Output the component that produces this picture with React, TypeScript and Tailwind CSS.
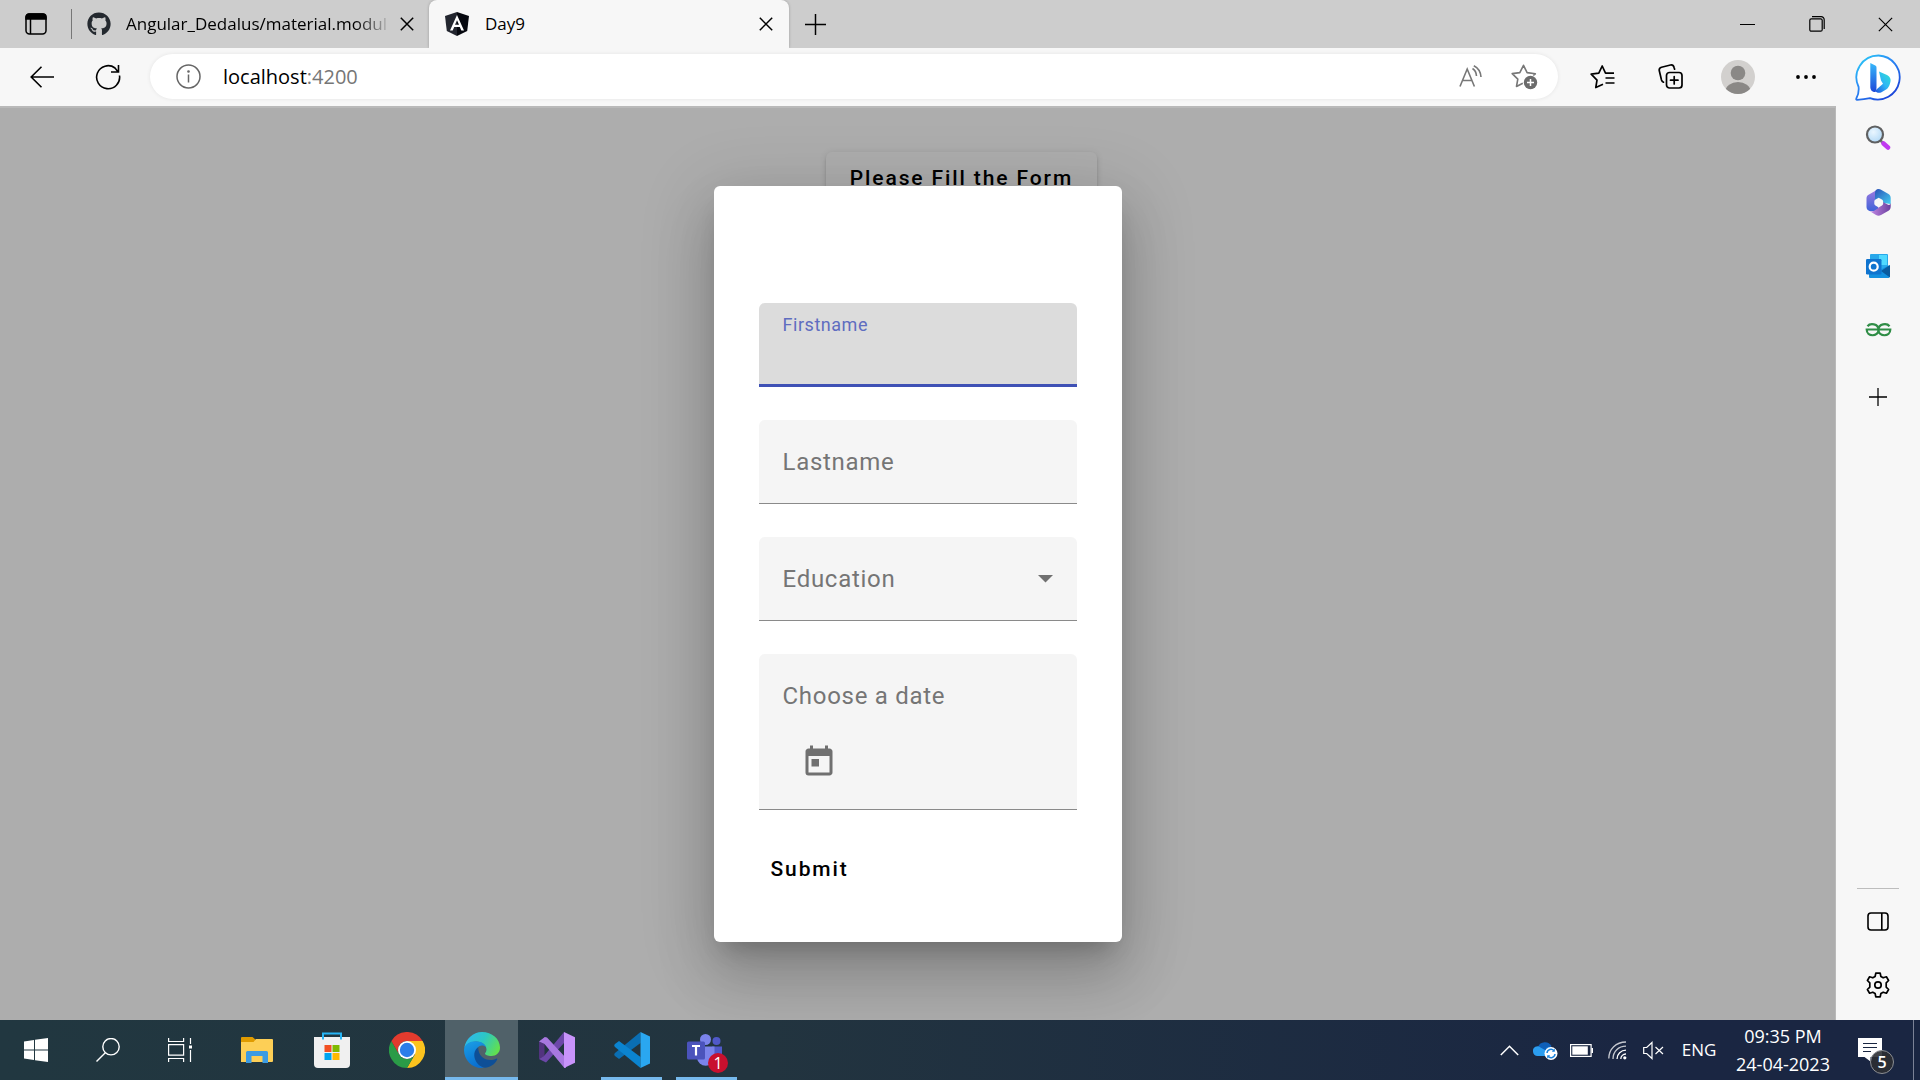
import { useState, type ReactNode } from "react";
import { FaGithub } from "react-icons/fa";
import { MdToday } from "react-icons/md";

const UI = "font-['Open_Sans','Noto_Sans',sans-serif]";

/* ---------- browser icons ---------- */

function TabActionsIcon() {
  return (
    <svg width="22" height="22" viewBox="0 0 22 22" fill="none" stroke="#000" strokeWidth="1.5">
      <rect x="1" y="1" width="20" height="20" rx="3.5" />
      <path d="M1 6V4a3 3 0 0 1 3-3h14a3 3 0 0 1 3 3v2z" fill="#000" />
      <path d="M5.5 6v15" />
    </svg>
  );
}

function CrossIcon({ size, width }: { size: number; width: number }) {
  return (
    <svg width={size} height={size} viewBox="0 0 14 14" fill="none" stroke="#000" strokeWidth={width}>
      <path d="M.8.8l12.4 12.4M13.2.8L.8 13.2" />
    </svg>
  );
}

function PlusIcon({ size }: { size: number }) {
  return (
    <svg width={size} height={size} viewBox="0 0 20 20" fill="none" stroke="#000" strokeWidth="1.4">
      <path d="M10 0v20M0 10h20" />
    </svg>
  );
}

function AngularIcon() {
  return (
    <svg width="24" height="24" viewBox="0 0 24 24">
      <path d="M12 0L0 4l1.8 15L12 24z" fill="#23262f" />
      <path d="M12 0l12 4-1.8 15L12 24z" fill="#06080f" />
      <path d="M12 3L5 18.5h2.7l1.5-3.5h5.6l1.5 3.5H19zm0 5.2l2 4.6h-4z" fill="#fff" fillRule="evenodd" />
    </svg>
  );
}

function BackIcon() {
  return (
    <svg width="24" height="22" viewBox="0 0 24 22" fill="none" stroke="#000" strokeWidth="1.6">
      <path d="M24 11H1.2M11.5.8L1.2 11l10.3 10.2" />
    </svg>
  );
}

function RefreshIcon() {
  return (
    <svg width="26" height="26" viewBox="0 0 26 26" fill="none" stroke="#000" strokeWidth="1.6">
      <path d="M24.5 11.5A11.5 11.5 0 1 1 20 4l2.8 3.5M23.5 1v7H16" />
    </svg>
  );
}

function InfoIcon() {
  return (
    <svg width="25" height="25" viewBox="0 0 25 25" fill="none" stroke="#666" strokeWidth="1.5">
      <circle cx="12.5" cy="12.5" r="11.5" />
      <path d="M12.5 10.5v8" />
      <circle cx="12.5" cy="7.5" r=".6" fill="#666" />
    </svg>
  );
}

function ReadAloudIcon() {
  return (
    <svg width="24" height="23" viewBox="0 0 24 23" fill="none" stroke="#777" strokeWidth="1.6">
      <path d="M1 21.5L8.2 4l7.2 17.5M3.5 15.5h9.4M13.5 3.5c2.3 1.5 3.8 4 4 7.5M14.8.8c4 2 6.8 5.8 7.2 11.2" />
    </svg>
  );
}

function StarAddIcon() {
  return (
    <svg width="27" height="27" viewBox="0 0 27 27" fill="none">
      <path
        d="M11.8 20.300L5.500 23.500l1.300-7.400L1.200 10.600l7.600-1 3.700-7.300 3.600 7.300 8.200 1.200-2 1.700"
        stroke="#777"
        strokeWidth="1.6"
        strokeLinejoin="round"
      />
      <circle cx="19.5" cy="19.5" r="6.7" fill="#6b6b6b" />
      <path d="M19.5 16v7M16 19.5h7" stroke="#fff" strokeWidth="1.5" />
    </svg>
  );
}

function FavoritesIcon() {
  return (
    <svg width="25" height="25" viewBox="0 0 25 25" fill="none" stroke="#000" strokeWidth="1.7" strokeLinejoin="round">
      <path d="M13 20.200l-7.200 3.300 1.200-7.400L1.200 10.200l7.600-1.100L12.200 2l3.300 7.100H24M15.500 14H24.500M15.500 19h9" />
    </svg>
  );
}

function CollectionsIcon() {
  return (
    <svg width="25" height="25" viewBox="0 0 25 25" fill="none" stroke="#000" strokeWidth="1.7" strokeLinecap="round">
      <rect x="8.5" y="8.5" width="15.5" height="15.5" rx="3" />
      <path d="M16.200 12.500v7.500M12.500 16.200h7.500" />
      <path d="M5.500 18.200A3.500 3.500 0 0 1 3.500 16L1.300 6.800A3 3 0 0 1 3.500 3.300L12.500 1a3 3 0 0 1 3.500 2.200l.6 2" />
    </svg>
  );
}

function AvatarIcon() {
  return (
    <svg width="34" height="34" viewBox="0 0 34 34">
      <defs>
        <clipPath id="avatar-clip">
          <circle cx="17" cy="17" r="17" />
        </clipPath>
      </defs>
      <g clipPath="url(#avatar-clip)">
        <rect width="34" height="34" fill="#d2d0ce" />
        <circle cx="17" cy="13" r="7.3" fill="#8a8886" />
        <ellipse cx="17" cy="31" rx="12.5" ry="9" fill="#8a8886" />
      </g>
    </svg>
  );
}

function DotsIcon() {
  return (
    <svg width="20" height="4" viewBox="0 0 20 4">
      <circle cx="2" cy="2" r="1.9" />
      <circle cx="10" cy="2" r="1.9" />
      <circle cx="18" cy="2" r="1.9" />
    </svg>
  );
}

function BingIcon() {
  return (
    <svg width="47" height="47" viewBox="0 0 47 47">
      <defs>
        <linearGradient id="bing-ring" x1="0" y1="0" x2=".8" y2="1">
          <stop offset="0" stopColor="#2bd3f5" />
          <stop offset=".45" stopColor="#2a8af6" />
          <stop offset="1" stopColor="#1b3fd6" />
        </linearGradient>
        <linearGradient id="bing-stem" x1="0" y1="0" x2="0" y2="1">
          <stop offset="0" stopColor="#37b9fb" />
          <stop offset="1" stopColor="#1c47d8" />
        </linearGradient>
        <linearGradient id="bing-bowl" x1="1" y1="0" x2="0" y2="1">
          <stop offset="0" stopColor="#2fe3d0" />
          <stop offset=".5" stopColor="#2fb7f5" />
          <stop offset="1" stopColor="#1d50dd" />
        </linearGradient>
      </defs>
      <path
        d="M23.500 1.500a22 22 0 1 1-8.500 42.600C10.500 45 6 45.500 2 45.800 1.200 45.800 1 45 1.300 44.500 3 41.500 4 37 3.600 33A22 22 0 0 1 23.500 1.500z"
        fill="#fff"
        stroke="url(#bing-ring)"
        strokeWidth="1.8"
      />
      <path
        d="M24 17.500l8 3.600c3.300 1.700 4.500 4.800 3 8.400-.6 2.500-1.800 4.500-3.500 5.700l-5 3c-2.500 1.200-5 .6-6.500-1.500l8-7-2-3.200z"
        fill="url(#bing-bowl)"
      />
      <path d="M15.300 9l5 2.600a2 2 0 0 1 1.200 1.900v20.800l-1 3.800c-3 .2-5.200-2-5.200-5.100z" fill="url(#bing-stem)" />
    </svg>
  );
}

/* ---------- sidebar icons ---------- */

function SearchSideIcon() {
  return (
    <svg width="26" height="26" viewBox="0 0 26 26">
      <defs>
        <radialGradient id="lens" cx=".4" cy=".35" r=".8">
          <stop offset="0" stopColor="#eaf6ff" />
          <stop offset="1" stopColor="#a9d4f5" />
        </radialGradient>
      </defs>
      <path d="M15.500 15.500l3 3" stroke="#777" strokeWidth="2.5" />
      <path d="M18.500 18.500l4.500 4" stroke="#c03af0" strokeWidth="4.5" strokeLinecap="round" />
      <circle cx="10" cy="9.5" r="8" fill="url(#lens)" stroke="#5f6061" strokeWidth="2.2" />
    </svg>
  );
}

function OfficeIcon() {
  return (
    <svg width="25" height="27" viewBox="0 0 25 27">
      <defs>
        <linearGradient id="m365-left" x1="0" y1="0" x2="0" y2="1">
          <stop offset="0" stopColor="#a07be0" />
          <stop offset="1" stopColor="#3d62d8" />
        </linearGradient>
        <linearGradient id="m365-top" x1="0" y1="0" x2="1" y2="1">
          <stop offset="0" stopColor="#2a52b8" />
          <stop offset="1" stopColor="#45cdf0" />
        </linearGradient>
        <linearGradient id="m365-bottom" x1="0" y1="0" x2="1" y2="0">
          <stop offset="0" stopColor="#c58ae6" />
          <stop offset="1" stopColor="#6a3f9e" />
        </linearGradient>
      </defs>
      <path d="M12.500 0L3 5.500C1 6.600.5 7.800.5 9.500V18c0 2 1 3 3 4l9 .5V0z" fill="url(#m365-left)" />
      <path d="M12.500 0c1 0 2 .3 3 .9l7 4.100c1.500 1 2.200 2.200 2.200 4v6L17 14H9V4c0-2.500 1.500-4 3.500-4z" fill="url(#m365-top)" />
      <path
        d="M24.700 13.500v4c0 2-.7 3.300-2.200 4.200L15 26.100c-1.700 1-3.300 1-5 0L3.500 22c2 .8 3.500.5 5-.4L12.500 19V13h4.500l4.500 2.500c1.800 1 3.200 0 3.200-2z"
        fill="url(#m365-bottom)"
      />
      <path
        d="M12.700 8.800l3.200 1.800c.8.500 1.200 1.100 1.200 2v2c0 .9-.4 1.500-1.200 2l-3.200 1.800-3.200-1.800c-.8-.5-1.200-1.100-1.200-2v-2c0-.9.4-1.500 1.200-2z"
        fill="#f7f7f7"
      />
    </svg>
  );
}

function OutlookIcon() {
  return (
    <svg width="26" height="26" viewBox="0 0 26 26">
      <rect x="5" y="1" width="18" height="18" rx="1" fill="#28a8ea" />
      <rect x="14" y="2" width="8" height="10" fill="#50d9ff" />
      <path d="M4 13l11 4 9.500-5v12a1 1 0 0 1-1 1H5a1 1 0 0 1-1-1z" fill="#1490df" />
      <path d="M25 12v12.500L16 18z" fill="#0a5a9e" />
      <rect x="1" y="6" width="15.5" height="15.5" rx="1.2" fill="#0f74cf" />
      <circle cx="8.700" cy="13.700" r="4" fill="none" stroke="#fff" strokeWidth="2.2" />
    </svg>
  );
}

function GeeksIcon() {
  return (
    <svg width="27" height="14" viewBox="0 0 27 14" fill="none" stroke="#2f8d46" strokeWidth="2.2">
      <path d="M24.500 3.200C22 0 13.500.2 13.500 7c0 6.800 11.800 7.300 11.800-.5H1.700C1.700 14.300 13.500 13.800 13.500 7 13.500.2 5 0 2.500 3.200" />
    </svg>
  );
}

function PanelIcon() {
  return (
    <svg width="22" height="19" viewBox="0 0 22 19" fill="none" stroke="#000" strokeWidth="1.6">
      <rect x="1" y="1" width="20" height="17" rx="3" />
      <path d="M14.800 1v17" />
    </svg>
  );
}

function GearIcon() {
  return (
    <svg width="26" height="26" viewBox="0 0 26 26" fill="none" stroke="#000" strokeWidth="1.7" strokeLinejoin="round">
      <circle cx="13" cy="13" r="3.2" />
      <path d="M10.800 1.200h4.400l.7 3.300 2.300 1.300 3.200-1 2.200 3.700-2.400 2.300v4.400l2.400 2.300-2.200 3.700-3.200-1-2.300 1.300-.7 3.300h-4.400l-.7-3.300-2.300-1.300-3.200 1-2.200-3.700 2.400-2.300v-4.400L2.400 8.500l2.200-3.700 3.200 1 2.300-1.300z" />
    </svg>
  );
}

/* ---------- taskbar icons ---------- */

function WindowsIcon() {
  return (
    <svg width="24" height="24" viewBox="0 0 24 24" fill="#fff">
      <path d="M0 3.400L10 2v9.500H0zM11 1.800L24 0v11.500H11zM0 12.500h10V22L0 20.600zM11 12.500h13V24l-13-1.800z" />
    </svg>
  );
}

function TaskSearchIcon() {
  return (
    <svg width="24" height="24" viewBox="0 0 24 24" fill="none" stroke="#fff" strokeWidth="1.4">
      <circle cx="15" cy="8.700" r="8.200" />
      <path d="M9.300 14.700L.5 23.500" />
    </svg>
  );
}

function TaskViewIcon() {
  return (
    <svg width="25" height="24" viewBox="0 0 25 24" fill="none" stroke="#fff" strokeWidth="1.2">
      <path d="M.6 0v3.500h15V0M.6 24v-3.500h15V24M.6 6.600h15v10.500H.6zM22.500 0v6M22.500 12v12" />
      <rect x="21" y="7.500" width="3" height="3" fill="#fff" stroke="none" />
    </svg>
  );
}

function FolderIcon() {
  return (
    <svg width="32" height="27" viewBox="0 0 32 27">
      <path d="M0 1a1 1 0 0 1 1-1h10.500L15 3v4H0z" fill="#e09b00" />
      <path d="M0 5h12.500L15 2h16a1 1 0 0 1 1 1v21a1 1 0 0 1-1 1H0z" fill="#fdcf56" />
      <path d="M5 15.500A1.500 1.500 0 0 1 6.500 14h19a1.500 1.500 0 0 1 1.500 1.500V26h-5.500v-7h-11v7H5z" fill="#3c9be2" />
    </svg>
  );
}

function StoreIcon() {
  return (
    <svg width="36" height="36" viewBox="0 0 36 36">
      <path d="M0 5h36v27a4 4 0 0 1-4 4H4a4 4 0 0 1-4-4z" fill="#f0f0f0" />
      <path d="M9 7.500V1.500h18v6" fill="none" stroke="#27b5f5" strokeWidth="2" />
      <path d="M10.500 13h7v7h-7z" fill="#f25022" />
      <path d="M18.500 13h7v7h-7z" fill="#7fba00" />
      <path d="M10.500 21h7v7h-7z" fill="#00a4ef" />
      <path d="M18.500 21h7v7h-7z" fill="#ffb900" />
    </svg>
  );
}

function ChromeIcon() {
  return (
    <svg width="36" height="36" viewBox="0 0 36 36">
      <path d="M18 9h15.600A18 18 0 0 1 18 36l7.800-13.500z" fill="#fcc31e" />
      <path d="M18 36A18 18 0 0 1 2.400 9l7.800 13.500A9 9 0 0 0 25.800 22.500z" fill="#2a9b47" />
      <path d="M2.400 9a18 18 0 0 1 31.200 0H18a9 9 0 0 0-7.800 13.500z" fill="#e33b2e" />
      <circle cx="18" cy="18" r="9" fill="#fff" />
      <circle cx="18" cy="18" r="7.200" fill="#2b7de9" />
    </svg>
  );
}

function EdgeIcon() {
  return (
    <svg width="36" height="36" viewBox="0 0 36 36">
      <defs>
        <linearGradient id="edge-top" x1="0" y1=".2" x2="1" y2=".6">
          <stop offset="0" stopColor="#2fb8f0" />
          <stop offset=".5" stopColor="#2cc7c4" />
          <stop offset="1" stopColor="#62e04e" />
        </linearGradient>
        <linearGradient id="edge-left" x1="0" y1="0" x2=".4" y2="1">
          <stop offset="0" stopColor="#1ba0e6" />
          <stop offset="1" stopColor="#0a6fd0" />
        </linearGradient>
      </defs>
      <path
        d="M.3 16C1.500 7 9 0 18 0c10 0 18 7 18 15.500 0 5.500-4 8.500-8.500 8.500-4 0-6.500-1.200-6.500-2.500 0-.7 1.500-1.500 1.500-4 0-4-4.500-8-10.500-8C6.500 9.500 2 12.500.3 16z"
        fill="url(#edge-top)"
      />
      <path
        d="M0 18c0-6 6-8.800 11.500-8.800 6 0 10 3 10.800 6.300-1.300-1.500-3-2-4.300-2-4 0-7 5-7 9.500 0 6 4.500 11 9 12.600-.7.300-1.500.4-2.500.4C8 36 0 28 0 18z"
        fill="url(#edge-left)"
      />
      <path
        d="M14.200 15.200C11 17.500 10 20.500 10.300 24c.5 5.500 5 11 10.700 11.700 5 0 10-3.500 12.200-8.200.3-.7-.4-1.200-1-.8-1.700.9-3.700 1.300-5.700 1.300-6.500 0-12.300-4.300-12.300-12.800z"
        fill="#0e4f97"
      />
    </svg>
  );
}

function VisualStudioIcon() {
  return (
    <svg width="36" height="36" viewBox="0 0 36 36">
      <path d="M0 9.500L5.500 12v12L0 27z" fill="#52337f" />
      <path d="M25 0v11L7 30.500 2 28l-2-1 5-3z" fill="#6c47a8" />
      <path d="M0 9.500L5.800 5 8 5.600 27 26v10l-2-.5L5.500 12z" fill="#a878e0" />
      <path d="M25 0l11 5.300v25.400L25 36z" fill="#c893fa" />
    </svg>
  );
}

function VsCodeIcon() {
  return (
    <svg width="36" height="36" viewBox="0 0 36 36">
      <path d="M26.500 0v11L5 27l-4-3c-1-.8-1-2 0-3z" fill="#0a6eb3" />
      <path d="M1 15c-1-1-1-2.200 0-3l4-3 21.500 16v11z" fill="#0b84d0" />
      <path d="M26.500 0L36 4.500v27L26.500 36z" fill="#2aa7f0" />
    </svg>
  );
}

function TeamsIcon() {
  return (
    <svg width="39" height="37" viewBox="0 0 39 37">
      <circle cx="29.500" cy="7" r="4" fill="#5059c9" />
      <circle cx="18.500" cy="5.500" r="5.500" fill="#7b83eb" />
      <path d="M25 12.500h10v12a6 6 0 0 1-8 5z" fill="#5059c9" />
      <path d="M10 12.500h17.500V24a8.800 8.800 0 0 1-17.500 0z" fill="#7b83eb" />
      <rect x="0" y="7.500" width="18" height="18" rx="1.500" fill="#4b53bc" />
      <path d="M5 12h8M9 12v9.500" stroke="#fff" strokeWidth="2.2" fill="none" />
    </svg>
  );
}

function ChevronUpIcon() {
  return (
    <svg width="19" height="11" viewBox="0 0 19 11" fill="none" stroke="#fff" strokeWidth="1.5">
      <path d="M.8 10L9.500 1.200l8.700 8.800" />
    </svg>
  );
}

function OneDriveIcon() {
  return (
    <svg width="25" height="20" viewBox="0 0 25 20">
      <path d="M5 7a7.500 7.500 0 0 1 13.500-1l-4 6.500L3 15z" fill="#0f5fb8" />
      <path d="M0 11.500a4.500 4.500 0 0 1 7.500-4L20 14.500 17 16H4.500A4.500 4.500 0 0 1 0 11.500z" fill="#2b9df0" />
      <path d="M13 8a6 6 0 0 1 9 3l-6 4z" fill="#1b83dc" />
      <circle cx="18" cy="13.500" r="6.500" fill="#fff" />
      <path d="M14 13a4 4 0 0 1 7-2.300M22 14a4 4 0 0 1-7 2.300" fill="none" stroke="#1b83dc" strokeWidth="1.5" />
      <path d="M21.800 8.500v3.200h-3zM14.200 18.500v-3.200h3z" fill="#1b83dc" />
    </svg>
  );
}

function BatteryIcon() {
  return (
    <svg width="23" height="13" viewBox="0 0 23 13">
      <rect x=".6" y=".6" width="20.500" height="11.800" fill="none" stroke="#fff" strokeWidth="1.2" />
      <rect x="2.300" y="2.300" width="15.500" height="8.400" fill="#fff" />
      <rect x="21.500" y="4" width="1.500" height="5" fill="#fff" />
    </svg>
  );
}

function WifiIcon() {
  return (
    <svg width="19" height="19" viewBox="0 0 19 19" fill="none" stroke="#fff" strokeWidth="1.3">
      <path d="M.8 17.500C.8 8 8 1 18 1M5 18C5 10.500 10.500 5.200 18 5.200" opacity=".75" />
      <path d="M9 18c0-5 4-8.800 9-8.800M12.800 18a5 5 0 0 1 5.200-5" />
      <circle cx="16.800" cy="16.800" r="1.600" fill="#fff" stroke="none" />
    </svg>
  );
}

function MutedIcon() {
  return (
    <svg width="21" height="19" viewBox="0 0 21 19" fill="none" stroke="#fff" strokeWidth="1.2">
      <path d="M.7 6.500h3L9 1.500v16l-5.300-5h-3zM12.500 6l7.500 7M20 6l-7.500 7" />
    </svg>
  );
}

function NotificationIcon() {
  return (
    <svg width="24" height="24" viewBox="0 0 24 24">
      <path d="M0 0h24v19H12.500l0 4.500-6-4.500H0z" fill="#fff" />
      <path d="M5 5.500h14M5 9.500h14M5 13.500h8" stroke="#1a2742" strokeWidth="1.2" />
    </svg>
  );
}

/* ---------- building blocks ---------- */

function IconButton({ label, className, children }: { label: string; className: string; children: ReactNode }) {
  return (
    <button type="button" aria-label={label} className={`flex shrink-0 items-center justify-center ${className}`}>
      {children}
    </button>
  );
}

const fieldLabel =
  "pointer-events-none px-6 text-2xl tracking-[0.03em] text-[#757575] [grid-area:1/1]";
const fieldBox = "grid items-center rounded-t-md border-b border-[#8a8a8a] bg-[#f5f5f5]";

function TabStrip() {
  return (
    <header className="flex h-12 shrink-0 items-stretch bg-[#cdcdcd]">
      <IconButton label="Tab actions menu" className="w-[71px]">
        <TabActionsIcon />
      </IconButton>
      <div className="h-[30px] w-px self-center bg-[#777]" />
      <div className="flex w-[357px] items-center px-[15px]">
        <FaGithub size={24} color="#24292f" className="shrink-0" />
        <span className="ml-[15px] min-w-0 flex-1 whitespace-nowrap text-[17px] [mask-image:linear-gradient(to_right,black_86%,transparent)]">
          Angular_Dedalus/material.modul
        </span>
        <IconButton label="Close Angular_Dedalus tab" className="ml-2">
          <CrossIcon size={14} width={1.5} />
        </IconButton>
      </div>
      <div className="flex w-[360px] items-center rounded-t-lg bg-[#f7f7f7] px-4 shadow-[0_0_3px_rgba(0,0,0,0.25)]">
        <AngularIcon />
        <span className="ml-4 flex-1 text-[17px]">Day9</span>
        <IconButton label="Close Day9 tab" className="">
          <CrossIcon size={14} width={1.5} />
        </IconButton>
      </div>
      <IconButton label="New tab" className="w-[53px]">
        <PlusIcon size={21} />
      </IconButton>
      <div className="flex-1" />
      <IconButton label="Minimize" className="w-[69px]">
        <svg width="15" height="1" viewBox="0 0 15 1">
          <rect width="15" height="1" />
        </svg>
      </IconButton>
      <IconButton label="Restore" className="w-[69px]">
        <svg width="16" height="16" viewBox="0 0 16 16" fill="none" stroke="#000" strokeWidth="1.2">
          <rect x=".8" y="2.800" width="12.400" height="12.400" rx="1.500" />
          <path d="M3 .7h9a3 3 0 0 1 3.200 3V13" />
        </svg>
      </IconButton>
      <IconButton label="Close window" className="w-[69px]">
        <CrossIcon size={15} width={1.1} />
      </IconButton>
    </header>
  );
}

function Toolbar() {
  return (
    <div className="flex h-[58px] shrink-0 items-center gap-5 bg-[#f7f7f7] pb-px pl-[9px] pr-1.5">
      <div className="flex min-w-0 flex-1 items-center">
        <IconButton label="Back" className="h-11 w-[66px]">
          <BackIcon />
        </IconButton>
        <IconButton label="Refresh" className="h-11 w-[66px]">
          <RefreshIcon />
        </IconButton>
        <div className="ml-[9px] flex h-[45px] min-w-0 flex-1 items-center rounded-full bg-white pl-[26px] pr-5 shadow-[0_0_4px_rgba(0,0,0,0.08)]">
          <IconButton label="View site information" className="">
            <InfoIcon />
          </IconButton>
          <a href="#" className="ml-[22px] flex-1 text-xl text-black">
            localhost<span className="text-[#767676]">:4200</span>
          </a>
          <IconButton label="Read aloud" className="w-20">
            <ReadAloudIcon />
          </IconButton>
          <IconButton label="Add to favorites" className="">
            <StarAddIcon />
          </IconButton>
        </div>
      </div>
      <IconButton label="Favorites" className="size-12">
        <FavoritesIcon />
      </IconButton>
      <IconButton label="Collections" className="size-12">
        <CollectionsIcon />
      </IconButton>
      <IconButton label="Profile" className="size-12">
        <AvatarIcon />
      </IconButton>
      <IconButton label="Settings and more" className="size-12">
        <DotsIcon />
      </IconButton>
    </div>
  );
}

function DialogForm() {
  const [education, setEducation] = useState("");
  return (
    <form
      role="dialog"
      aria-label="Personal details"
      onSubmit={(e) => e.preventDefault()}
      className="flex w-[408px] flex-col gap-[33px] rounded-md bg-white px-[45px] pb-[45px] pt-[117px] shadow-[0_16px_22px_-10px_rgba(0,0,0,0.2),0_36px_57px_4px_rgba(0,0,0,0.14),0_13px_69px_12px_rgba(0,0,0,0.12)]"
    >
      <div className="grid h-[84px] rounded-t-md border-b-3 border-[#3f51b5] bg-[#dcdcdc]">
        <label
          htmlFor="firstname"
          className="pointer-events-none self-start px-6 pt-2.5 text-lg leading-6 tracking-[0.03em] text-[#5f6dc0] [grid-area:1/1]"
        >
          Firstname
        </label>
        <input id="firstname" className="w-full bg-transparent px-6 pt-8 text-2xl outline-none [grid-area:1/1]" />
      </div>

      <div className={`h-[84px] ${fieldBox}`}>
        <label htmlFor="lastname" className={fieldLabel}>
          Lastname
        </label>
        <input id="lastname" className="h-full w-full bg-transparent px-6 text-2xl outline-none [grid-area:1/1]" />
      </div>

      <div className={`h-[84px] ${fieldBox}`}>
        <label htmlFor="education" className={fieldLabel}>
          {education ? "" : "Education"}
        </label>
        <select
          id="education"
          value={education}
          onChange={(e) => setEducation(e.target.value)}
          className="h-full w-full appearance-none bg-transparent px-6 text-2xl outline-none [grid-area:1/1]"
        >
          <option value="" />
        </select>
        <svg
          width="15"
          height="8"
          viewBox="0 0 15 8"
          className="pointer-events-none mr-6 justify-self-end [grid-area:1/1]"
        >
          <path d="M0 0h15L7.500 7.500z" fill="#707070" />
        </svg>
      </div>

      <div className={`pb-[11px] ${fieldBox}`}>
        <label htmlFor="date" className={`pt-3 ${fieldLabel}`}>
          Choose a date
        </label>
        <input id="date" className="h-[72px] w-full bg-transparent px-6 text-2xl outline-none [grid-area:1/1]" />
        <IconButton label="Open calendar" className="ml-6 size-[72px]">
          <MdToday size={36} color="#707070" />
        </IconButton>
      </div>

      <button
        type="submit"
        className="h-[54px] self-start px-3 text-[21px] font-medium tracking-[0.09em] text-black"
      >
        Submit
      </button>
    </form>
  );
}

function Sidebar() {
  return (
    <aside className="flex w-[84px] shrink-0 flex-col items-center bg-[#f7f7f7] pb-[3px]">
      <IconButton label="Discover" className="h-[58px] w-full">
        <BingIcon />
      </IconButton>
      <IconButton label="Search" className="h-16 w-full">
        <SearchSideIcon />
      </IconButton>
      <IconButton label="Microsoft 365" className="h-16 w-full">
        <OfficeIcon />
      </IconButton>
      <IconButton label="Outlook" className="h-16 w-full">
        <OutlookIcon />
      </IconButton>
      <IconButton label="GeeksforGeeks" className="h-16 w-full">
        <GeeksIcon />
      </IconButton>
      <IconButton label="Customize sidebar" className="h-[70px] w-full">
        <PlusIcon size={18} />
      </IconButton>
      <div className="flex-1" />
      <div className="h-px w-[42px] bg-[#bdbdbd]" />
      <IconButton label="Hide sidebar" className="h-16 w-full">
        <PanelIcon />
      </IconButton>
      <IconButton label="Sidebar settings" className="h-16 w-full">
        <GearIcon />
      </IconButton>
    </aside>
  );
}

function Taskbar() {
  return (
    <footer className="flex h-[60px] shrink-0 items-stretch bg-linear-to-r from-[#213740] via-[#22343f] via-40% to-[#1a2642] to-85% text-white">
      <IconButton label="Start" className="w-[72px]">
        <WindowsIcon />
      </IconButton>
      <IconButton label="Search" className="w-[72px]">
        <TaskSearchIcon />
      </IconButton>
      <IconButton label="Task View" className="w-[72px]">
        <TaskViewIcon />
      </IconButton>
      <div className="ml-[3px] flex">
        <IconButton label="File Explorer" className="w-[75px]">
          <FolderIcon />
        </IconButton>
        <IconButton label="Microsoft Store" className="w-[75px]">
          <StoreIcon />
        </IconButton>
        <IconButton label="Google Chrome" className="w-[75px]">
          <ChromeIcon />
        </IconButton>
        <IconButton label="Microsoft Edge" className="mx-px w-[73px] border-b-3 border-[#76b9ed] bg-[#506169] pt-[3px]">
          <EdgeIcon />
        </IconButton>
        <IconButton label="Visual Studio" className="w-[75px]">
          <VisualStudioIcon />
        </IconButton>
        <IconButton label="Visual Studio Code" className="mx-[7px] w-[61px] border-b-3 border-[#76b9ed] pt-[3px]">
          <VsCodeIcon />
        </IconButton>
        <IconButton label="Microsoft Teams" className="mx-[7px] w-[61px] border-b-3 border-[#76b9ed] pt-[7px]">
          <span className="relative">
            <TeamsIcon />
            <span className="absolute -bottom-0.5 -right-0.5 flex size-5 items-center justify-center rounded-full bg-[#c8102e] text-base">
              1
            </span>
          </span>
        </IconButton>
      </div>
      <div className="flex-1" />
      <div className="flex items-stretch">
        <IconButton label="Show hidden icons" className="w-9">
          <ChevronUpIcon />
        </IconButton>
        <IconButton label="OneDrive" className="w-9">
          <OneDriveIcon />
        </IconButton>
        <IconButton label="Battery" className="w-9">
          <BatteryIcon />
        </IconButton>
        <IconButton label="Network" className="w-9">
          <WifiIcon />
        </IconButton>
        <IconButton label="Volume" className="w-9">
          <MutedIcon />
        </IconButton>
        <button type="button" className="w-14 text-[17px]">
          ENG
        </button>
        <button type="button" className="w-[112px] text-center text-lg leading-7">
          <span className="block">09:35 PM</span>
          <span className="block">24-04-2023</span>
        </button>
        <IconButton label="Notifications" className="w-[74px] pr-3">
          <span className="relative">
            <NotificationIcon />
            <span className="absolute -bottom-3 -right-3 flex size-6 items-center justify-center rounded-full border border-[#8c8f94] bg-[#2c2f33]/90 text-base font-semibold">
              5
            </span>
          </span>
        </IconButton>
        <div className="mr-1.5 w-px bg-[#7b8296]" />
      </div>
    </footer>
  );
}

export default function App() {
  return (
    <div className={`flex h-screen flex-col overflow-hidden bg-[#f7f7f7] text-black ${UI}`}>
      <TabStrip />
      <div className="flex min-h-0 flex-1">
        <div className="flex min-w-0 flex-1 flex-col">
          <Toolbar />
          <main className="relative min-h-0 flex-1 overflow-hidden border-r border-t-2 border-[#b9b9b9] bg-white font-[Roboto,sans-serif]">
            <button
              type="button"
              className="ml-[45%] mt-11 h-[54px] whitespace-nowrap rounded-md bg-white px-6 text-[21px] font-medium tracking-[0.09em] text-black shadow-[0_5px_2px_-3px_rgba(0,0,0,0.2),0_3px_3px_rgba(0,0,0,0.14),0_1px_7px_rgba(0,0,0,0.12)]"
            >
              Please Fill the Form
            </button>
            <div className="absolute inset-0 flex items-center justify-center bg-black/32">
              <DialogForm />
            </div>
          </main>
        </div>
        <Sidebar />
      </div>
      <Taskbar />
    </div>
  );
}
